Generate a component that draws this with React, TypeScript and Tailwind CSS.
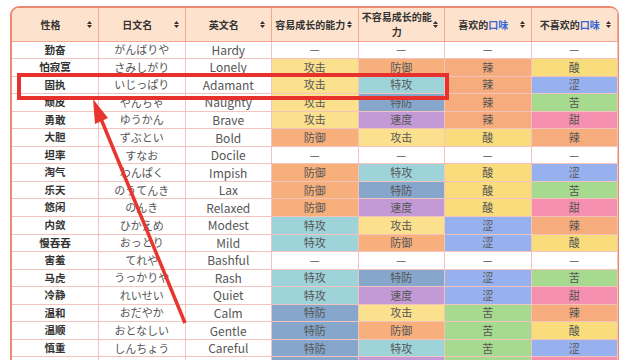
const cellColor: Record<string, string> = {
  攻击: 'bg-[#fbe08e]',
  防御: 'bg-[#f7b07c]',
  特攻: 'bg-[#9fd3da]',
  特防: 'bg-[#86a7cb]',
  速度: 'bg-[#c49ad6]',
  辣: 'bg-[#f6ac7c]',
  酸: 'bg-[#f9dd7c]',
  涩: 'bg-[#97b1ef]',
  苦: 'bg-[#a6da8f]',
  甜: 'bg-[#f58fb0]',
  '—': 'bg-white',
};

const natures = [
  ['勤奋', 'がんばりや', 'Hardy', '—', '—', '—', '—'],
  ['怕寂寞', 'さみしがり', 'Lonely', '攻击', '防御', '辣', '酸'],
  ['固执', 'いじっぱり', 'Adamant', '攻击', '特攻', '辣', '涩'],
  ['顽皮', 'やんちゃ', 'Naughty', '攻击', '特防', '辣', '苦'],
  ['勇敢', 'ゆうかん', 'Brave', '攻击', '速度', '辣', '甜'],
  ['大胆', 'ずぶとい', 'Bold', '防御', '攻击', '酸', '辣'],
  ['坦率', 'すなお', 'Docile', '—', '—', '—', '—'],
  ['淘气', 'わんぱく', 'Impish', '防御', '特攻', '酸', '涩'],
  ['乐天', 'のうてんき', 'Lax', '防御', '特防', '酸', '苦'],
  ['悠闲', 'のんき', 'Relaxed', '防御', '速度', '酸', '甜'],
  ['内敛', 'ひかえめ', 'Modest', '特攻', '攻击', '涩', '辣'],
  ['慢吞吞', 'おっとり', 'Mild', '特攻', '防御', '涩', '酸'],
  ['害羞', 'てれや', 'Bashful', '—', '—', '—', '—'],
  ['马虎', 'うっかりや', 'Rash', '特攻', '特防', '涩', '苦'],
  ['冷静', 'れいせい', 'Quiet', '特攻', '速度', '涩', '甜'],
  ['温和', 'おだやか', 'Calm', '特防', '攻击', '苦', '辣'],
  ['温顺', 'おとなしい', 'Gentle', '特防', '防御', '苦', '酸'],
  ['慎重', 'しんちょう', 'Careful', '特防', '特攻', '苦', '涩'],
  ['浮躁', 'なまいき', 'Sassy', '特防', '速度', '苦', '甜'],
];

function SortIcon() {
  return (
    <svg width="5" height="7" viewBox="0 0 5 7" className="shrink-0">
      <path d="M2.5 0 L5 3 L0 3 Z M0 4 L5 4 L2.5 7 Z" fill="#333" />
    </svg>
  );
}

function HeadCell({ children }: { children: React.ReactNode }) {
  return (
    <th className="h-[33px] border-r border-b border-[#f0a894] p-0 font-bold">
      <div className="flex items-center pl-[2px] pr-[6px]">
        <div className="flex-1 whitespace-nowrap text-center text-[10px] leading-[15px] text-[#333]">{children}</div>
        <SortIcon />
      </div>
    </th>
  );
}

export default function App() {
  return (
    <div className="relative h-[360px] w-[640px] overflow-hidden bg-white font-['Noto_Sans_CJK_SC','Noto_Sans',sans-serif]">
      {/* 表格 */}
      <div className="ml-[10px] mt-[6px] w-[609px] overflow-hidden rounded-t-[9px] border-2 border-r-[1.5px] border-[#ea8a70]">
        <table className="w-full table-fixed border-collapse">
          <thead className="bg-[#fde2cd]">
            <tr>
              <HeadCell>性格</HeadCell>
              <HeadCell>日文名</HeadCell>
              <HeadCell>英文名</HeadCell>
              <HeadCell>容易成长的能力</HeadCell>
              <HeadCell>
                不容易成长的能
                <br />力
              </HeadCell>
              <HeadCell>
                喜欢的<span className="text-[#3569d6]">口味</span>
              </HeadCell>
              <HeadCell>
                不喜欢的<span className="text-[#3569d6]">口味</span>
              </HeadCell>
            </tr>
          </thead>
          <tbody>
            {natures.map((row) => (
              <tr key={row[0]} className="h-[17.55px]">
                <td className="border-r border-b border-[#f3c4bd] p-0 text-center text-[10.5px] leading-none font-bold text-[#333]">
                  {row[0]}
                </td>
                <td className="border-r border-b border-[#f3c4bd] p-0 text-center text-[11px] leading-none text-[#555]">
                  {row[1]}
                </td>
                <td className="border-r border-b border-[#f3c4bd] p-0 text-center text-[12px] leading-none text-[#555]">
                  {row[2]}
                </td>
                {row.slice(3).map((v, i) => (
                  <td
                    key={i}
                    className={`border-r border-b border-[#f3c4bd] p-0 text-center text-[11px] leading-none text-[#555] ${cellColor[v]}`}
                  >
                    {v}
                  </td>
                ))}
              </tr>
            ))}
          </tbody>
        </table>
      </div>

      {/* 标注框 */}
      <div className="absolute left-[17px] top-[73px] h-[27px] w-[432px] border-[4px] border-[#e8302c]" />

      {/* 箭头 */}
      <svg className="absolute left-0 top-0" width="640" height="360">
        <line x1="185" y1="323" x2="99" y2="114" stroke="#e8352f" strokeWidth="3.5" />
        <path d="M93 99 L108 118 L95 124 Z" fill="#e8352f" />
      </svg>
    </div>
  );
}
